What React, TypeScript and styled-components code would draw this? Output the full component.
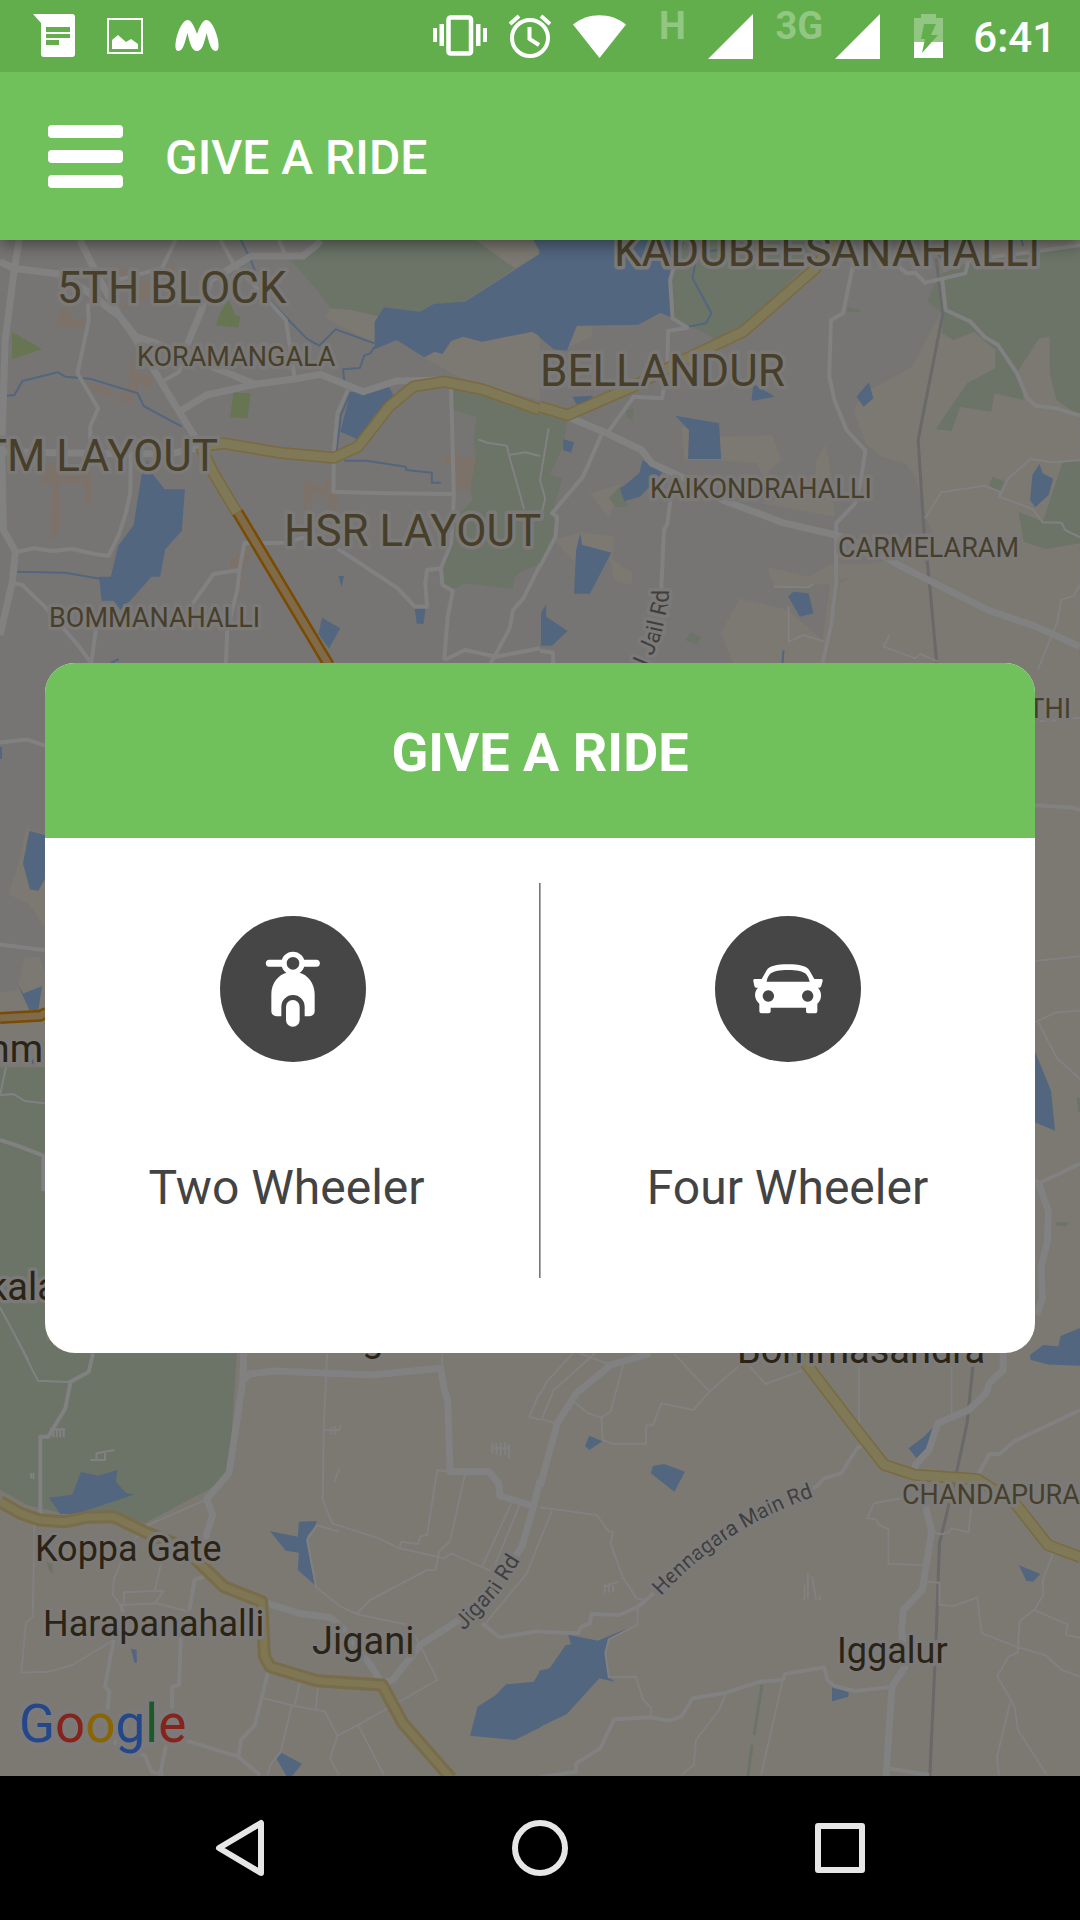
import React from "react";
import styled, { createGlobalStyle } from "styled-components";

const color = {
  brand: "#70c15b",
  brandDark: "#62ae4d",
  brandFaded: "#92c783",
  ink: "#434343",
  badge: "#464646",
  nav: "#e6e6e6",
  urban: "#777573",
  rural: "#7c7872",
  built: "#7d7269",
  park: "#6b7467",
  garden: "#677552",
  water: "#52667f",
  road: "#818182",
  rail: "#69696a",
  halo: "#7b7a79",
  district: "#473f2a",
  town: "#2b2414",
  street: "#3f3f3f",
};

const GlobalStyle = createGlobalStyle`
  *, *::before, *::after { box-sizing: border-box; }
  body { margin: 0; background: #000; }
  button { font: inherit; color: inherit; border: 0; padding: 0; background: none; cursor: pointer; }
  svg { display: block; }
`;

const Screen = styled.div`
  display: flex;
  flex-direction: column;
  min-height: 100vh;
  overflow: hidden;
  font-family: Roboto, "Liberation Sans", sans-serif;
`;

/* ---------- status bar ---------- */

const StatusBar = styled.header`
  display: flex;
  justify-content: space-between;
  align-items: center;
  height: 72px;
  padding: 0 24px 0 33px;
  background: ${color.brandDark};
  color: #fff;
  z-index: 2;
`;

const StatusGroup = styled.div<{ $gap: number }>`
  display: flex;
  align-items: center;
  gap: ${(p) => p.$gap}px;
  height: 100%;
`;

const Network = styled.div`
  display: flex;
  align-items: center;
  gap: 12px;
  height: 100%;
`;

const NetworkType = styled.span`
  align-self: flex-start;
  width: 48px;
  text-align: center;
  font-size: 38px;
  line-height: 52px;
  font-weight: 700;
  color: ${color.brandFaded};
`;

const BatterySlot = styled.div`
  padding: 0 8px 0 12px;
`;

const Clock = styled.time`
  padding-top: 4px;
  font-size: 42px;
  line-height: 48px;
  font-weight: 500;
`;

/* ---------- app bar ---------- */

const AppBar = styled.div`
  display: flex;
  align-items: center;
  gap: 42px;
  height: 168px;
  padding: 0 48px;
  background: ${color.brand};
  color: #fff;
  box-shadow: 0 4px 16px rgba(0, 0, 0, 0.45);
  z-index: 1;
`;

const MenuButton = styled.button`
  display: flex;
  flex-direction: column;
  gap: 12px;
  width: 75px;
`;

const MenuLine = styled.span`
  height: 13px;
  border-radius: 4px;
  background: #fff;
`;

const PageTitle = styled.h1`
  margin: 0;
  padding-top: 4px;
  font-size: 48px;
  line-height: 56px;
  font-weight: 500;
`;

/* ---------- map ---------- */

const Stage = styled.main`
  flex: 1;
  display: grid;
  grid-template-columns: minmax(0, 1fr);
  background: ${color.rural};
`;

const MapCanvas = styled.svg`
  grid-area: 1 / 1;
  width: 100%;
  height: 100%;
`;

const Area = styled.path<{ $fill: string }>`
  fill: ${(p) => p.$fill};
`;

const Line = styled.path<{ $stroke: string; $width: number }>`
  fill: none;
  stroke: ${(p) => p.$stroke};
  stroke-width: ${(p) => p.$width}px;
  stroke-linejoin: round;
  vector-effect: non-scaling-stroke;
`;

const MapLabel = styled.text<{ $tone: string; $size: number }>`
  font-family: Roboto, "Liberation Sans", sans-serif;
  font-size: ${(p) => p.$size}px;
  fill: ${(p) => p.$tone};
  stroke: ${color.halo};
  stroke-width: 7px;
  stroke-linejoin: round;
  paint-order: stroke;
`;

const MapLogo = styled(MapLabel)`
  stroke-width: 10px;
`;

type Kind =
  | "urban" | "rural" | "built" | "park" | "garden" | "water"
  | "stream" | "rail" | "lane" | "road" | "avenue"
  | "state" | "national" | "toll";

type Tile = { at: [number, number]; scale: [number, number]; shapes: Partial<Record<Kind, string>> };

const drawOrder: Kind[] = [
  "urban", "rural", "park", "built", "garden", "water", "stream",
  "rail", "lane", "road", "avenue", "state", "national", "toll",
];

const fills: Partial<Record<Kind, string>> = {
  urban: color.urban, rural: color.rural, built: color.built,
  park: color.park, garden: color.garden, water: color.water,
};

const strokes: Partial<Record<Kind, [string, number][]>> = {
  stream: [[color.water, 2]],
  rail: [[color.rail, 3]],
  lane: [[color.road, 2]],
  road: [[color.road, 4]],
  avenue: [[color.road, 7]],
  state: [["#786c4a", 13], ["#7f7654", 7]],
  national: [["#7a6a40", 12], ["#807957", 9]],
  toll: [["#7a4b00", 12], ["#7f6a4a", 7]],
};

const wide: [number, number] = [0.34436, 0.33333];

const tiles: Tile[] = [
  {
    at: [0, 230], scale: wide,
    shapes: {
      urban: "M0 0H1570V1720H135V2800H0Z",
      rural: "M945 262L960 235L1020 238L1098 258L1088 340L990 290ZM1230 382L1262 365L1285 372L1310 335L1345 320L1400 335L1545 305L1568 320V510L1450 480L1330 440ZM1380 30H1568V70L1495 115Z",
      park: "M930 30H1380L1495 115L1345 215L1220 245L1115 232L1098 258L1020 240L960 235L920 180L845 90L890 80ZM1315 475L1440 490L1570 550V1005L1520 1020L1495 1040L1488 1077L1350 1060L1318 1078L1290 1065L1288 1000L1305 940L1325 860L1372 810L1365 770L1382 680L1375 630L1384 560L1315 540Z",
      built: "M175 235H200L205 265L243 268L238 292L163 290ZM395 370L385 425L448 445L430 475L405 455L380 520L340 510L375 460L380 390ZM400 150L435 155L430 205L380 225L350 250ZM120 700H265V825H245V758H172L175 850L165 928H147L152 760H120ZM883 752H905V770H940L955 728L970 790L985 795L975 840H955L950 790H905V840H883ZM1290 680L1325 665L1345 685L1382 682L1365 780H1320V700H1290ZM668 990L720 950L725 985L702 1030L695 1110L685 1105L690 1015L668 1010ZM240 450L325 480L318 500L260 480ZM345 115L370 120V145H345ZM478 97L515 105L500 130L470 120Z",
      garden: "M35 305L122 358L35 387ZM665 210L683 255L698 258L692 293L627 286L640 245ZM678 487L728 490L719 565L668 562Z",
      water: "M1570 70V320L1545 305L1400 335L1345 320L1310 332L1285 372L1262 365L1232 382L1152 330L1088 358V275L1115 232L1220 245L1260 222L1350 215ZM1548 30H1570V68ZM1018 487L1130 472L1142 495L1085 560L1038 628L988 605ZM428 690L438 725L478 778H537L528 902L480 958L465 1040H440L380 1110L350 1140L330 1112H295L288 1040H322L343 948L388 885L412 730ZM983 1038H999L992 1072ZM1204 1133H1236L1230 1181H1210ZM935 1163L988 1195L955 1256L925 1212Z",
      stream: "M700 30L730 95L765 190L810 240L890 325L927 347L975 298L1088 340M1088 350L1075 370L1058 376L1045 414L996 418L1000 455M15 497L42 495L65 453L168 427L190 440L260 446L400 490L417 528L528 590M50 1025L190 1028L290 1046M1018 487L990 555L977 665M1000 692L1065 692L1178 710L1180 720L1254 728V758H1280M322 1299L345 1287",
      avenue: "M232 30L290 150L345 255L390 320L470 460L520 545L590 660M0 95L40 115L170 132L240 175L350 262L395 320L455 340L520 370L640 420L740 463L855 447L930 433L1055 485L1150 453L1290 450M55 30L40 130L15 330L5 660L10 900L45 965L35 1060L0 1215M0 665L380 672L500 670L590 650M930 30L920 45L880 78L730 78L670 115L610 150L585 240L545 340M740 463L600 495L520 545",
      road: "M545 340L520 425L470 455M510 30L470 115L340 150M640 30L680 105L720 145L830 270L855 440M810 30L830 80M255 220L258 270L225 430L285 535L262 590V650M380 680L378 790L365 850L345 915L315 978L275 972L210 957L150 963L100 955L50 965M1010 480L980 550L970 660L968 785L1120 790L1315 792M1310 475L1318 800L1310 940L1280 1015L1285 1065L1315 1083L1300 1160L1290 1290M1280 1015L1240 1020L1235 1060L1240 1130H1205L1155 1075L980 955M740 940L830 938L890 920M740 940L710 938L695 1020L690 1075L660 1200L656 1300M695 1020L620 1032L560 1120M40 1060L65 1065L130 1130L230 1250L265 1300L280 1190M1290 1290L1350 1260L1440 1280L1568 1255M1425 1300L1480 1195L1490 1140L1520 1105L1568 1005",
      lane: "M1388 628L1415 638L1472 647L1478 675L1522 838M1478 675L1525 667L1568 678",
      national: "M590 648L650 640L810 668L970 683L1040 650L1130 530L1200 470L1290 455L1400 478L1570 540M583 650L620 730L690 850",
      toll: "M690 847L955 1305",
    },
  },
  {
    at: [540, 230], scale: wide,
    shapes: {
      urban: "M0 0H1170V900L870 1060L830 1320H0Z",
      rural: "M1165 245L1200 330L1568 200V1320H1150L1120 1120L1050 1150L1080 1250L990 1230L1000 1110L950 1080L980 1030L870 1050L830 1320H700L560 1300L525 1210L580 1105L720 1140L820 1230L850 1000L960 1000L1160 960L1120 860L1090 740L1060 700L990 680L945 640L910 540L940 490L1080 410ZM108 288H153L150 320L95 345L75 362ZM410 590L530 620L675 615L700 690L650 740L630 700L520 690H420ZM800 690L830 645L850 760L855 860L640 820L800 780ZM40 930L120 905L215 920L210 990L270 1030L265 1065L215 1050L200 970L95 990ZM660 1010L780 1040L850 1000L860 1060L680 1075ZM145 790L240 760L200 865Z",
      park: "M410 30H840L600 290L520 335L480 310L380 260L378 150ZM1170 130L1240 100L1390 70L1568 45V560L1500 510L1480 430L1480 320L1450 325L1390 420L1405 510L1320 490L1310 545L1220 530L1195 603L1150 597L1240 460L1323 415V360L1260 305L1200 330L1168 310L1170 250L1125 215L1145 165ZM1390 845L1460 875L1520 690L1568 695V940L1470 957L1405 935ZM1315 740L1348 755L1335 785L1303 765ZM0 545L78 573L70 640L30 735L65 745L35 850L50 900L0 1000ZM200 805L235 765L255 830L220 832ZM420 1230L440 1207L467 1222L455 1245ZM893 231L930 238V246H893ZM250 540L272 535L268 570L250 562Z",
      water: "M-2 30H420L378 150L385 265L350 248L285 284L107 287L78 362L40 358L-2 322ZM620 462L682 500L614 513ZM955 457L968 505L940 530L919 500ZM393 557L520 580L526 687H430L433 600ZM298 690L355 728L320 768L290 800L245 814L232 777L288 730ZM117 910L122 944L207 968L145 1091H99L105 960ZM18 1122V1160L80 1203L35 1247H3V1150ZM735 1085L780 1090L794 1150L755 1160L721 1100ZM1450 702L1460 730L1490 746L1477 795L1438 832L1423 810L1430 735ZM68 628L99 637L90 668L67 660ZM95 500L155 497L130 525L105 522ZM770 780L820 775L805 810Z",
      stream: "M628 35L570 75L510 60L455 75L443 145L498 250L482 280L430 290M1155 70L1180 105L1230 80M707 1262L704 1300M1398 30L1403 48",
      rail: "M1150 85L1170 250L1098 630L1115 900L1133 1080L1152 1300",
      lane: "M1118 865L1165 787L1290 767L1335 785L1333 800L1430 837L1460 877L1515 878L1525 900L1568 922M1335 800L1360 745L1425 687L1490 697L1568 690M722 1130V1235L765 1215L825 1235M680 1070L780 1072L793 1062M1568 1065L1550 1097L1513 1110L1503 1175L1445 1320M1015 1215L998 1250L1090 1285L1105 1272L1155 1295M25 595L0 750L15 805L5 850",
      road: "M410 30L378 150L385 265L428 293L372 303L370 400L355 505L272 500L195 610M910 100L880 250L845 270L840 440L855 510L890 600L945 662L930 760L915 820L860 880V1060L845 1190L820 1300M1020 90L1065 130L1090 128L1118 158L1235 130L1245 90L1400 70L1568 45M1168 150L1178 240L1250 275L1290 320L1330 345L1385 430L1415 505L1440 527L1500 535L1568 557M180 610L125 740L35 850L50 860L45 920L0 1010M380 800L370 880L360 900L352 1080M0 1262L38 1268V1300",
      avenue: "M90 565L195 610L295 660L325 700L420 745L530 810L705 878L860 915L970 960L1050 1010L1300 1140L1440 1190L1568 1250",
      national: "M-2 530L80 555L270 470L420 388L590 305L800 115L855 30",
    },
  },
  {
    at: [0, 660], scale: [0.33333, 0.44643],
    shapes: {
      rural: "M80 375L135 392V600L85 545L25 525L55 455ZM0 745L50 740L75 665H120L135 700V1100H0Z",
      park: "M0 912H140V1568H0Z",
      water: "M0 195H6V222H0ZM88 383L135 392V490L115 517L90 514L69 455ZM52 725L70 747L126 731L115 784H88ZM80 900L105 893L100 906Z",
      lane: "M18 912L0 975L40 972L75 988L135 993M0 1450L85 1568",
      road: "M0 185L80 178L135 192M0 637L135 650M0 1075L60 1090L130 1110V1190",
      toll: "M0 802L120 797L140 790",
    },
  },
  {
    at: [960, 640], scale: [0.33333, 0.47194],
    shapes: {
      park: "M288 1233L328 1235L318 1242L288 1240ZM350 970H360V1000H355Z",
      water: "M225 872L273 955L285 1040L225 1022ZM210 1515L250 1494L295 1497L302 1475L360 1458V1538L265 1535L212 1525Z",
      lane: "M225 680L360 670M225 810L285 790L360 785M235 810L290 885L360 930M225 170L250 172L360 165",
      road: "M225 350L335 355L360 360M360 1110L240 1150L225 1145",
      avenue: "M235 1150L265 1210L262 1275L243 1330L247 1395L230 1430",
    },
  },
  {
    at: [0, 1340], scale: wide,
    shapes: {
      park: "M0 0H690L665 400L630 435L420 550L330 520L180 520L80 495L0 450ZM135 665L153 672V702L142 690Z",
      water: "M235 396L285 407L340 390L337 425L365 458L388 464L220 522H175L142 473L210 464ZM868 545L920 543L915 560L892 588L900 660L918 738L865 690L868 638L830 632L784 574L865 590ZM380 926L397 930V969H391ZM1570 990L1550 1025L1470 1033L1440 1065L1387 1100L1365 1187L1495 1200L1570 1162ZM818 1239L877 1271L848 1308H832L802 1254Z",
      lane: "M50 0L110 122L195 126L205 122M950 40L940 270L937 480L965 550L1100 595L1160 625L1290 655L1310 640L1430 695M600 478L430 555L390 600M100 545L95 830L75 850L62 998L140 995L210 975L330 900M470 660L450 750M350 670L330 720L328 765L350 795L455 790L550 815M360 790V757L475 752L450 790M1284 40V85M1307 395L1270 390L1240 585L1220 590L1215 612L1165 605L1160 625M1350 405L1307 603L1275 635L1265 690L1240 690L1075 780L1035 822L990 800L918 742L892 600L920 556L985 575M1035 822L1185 855L1220 915L1270 1020L1040 1155L980 1187L958 1255L985 1305M1040 1155L1115 1305M870 1030L855 1098L765 1075M923 1035L917 1112M855 1098L943 1114L980 1187M847 1098L815 1235L785 1275L778 1305M1485 490L1400 680M1510 492L1435 680M1568 155L1537 230L1568 240M1568 600L1530 700L1410 850M940 270H985L990 255M962 260V285M972 258V285M970 427L985 387M145 268H190M155 270V292M165 270V292M175 270V292M185 270V292M263 360H305V340M280 360V340L332 330M1430 310V340M1442 308V345M1454 306V348M1466 306V345M1478 312V355M1428 325H1480M90 400V415M97 398V418",
      road: "M270 40L258 95L205 125L190 205L140 290H117V522M600 680L590 710L565 720L550 810M1400 850L1450 892L1568 873M330 900L305 1040L318 1055L308 1150L345 1230L420 1245L440 1295L475 1305M525 890L520 1035L500 1040V1130M490 1180L465 1300M780 990L740 1155L700 1200L692 1250L755 1305M520 1195L692 1250M340 1180L350 1240M350 790L360 830",
      avenue: "M708 40L705 120L690 230L665 400L600 478L618 525L600 580V680M705 120L725 102L800 93L1080 105L1280 85L1290 150L1300 180L1307 395L1420 395L1448 430L1452 468L1550 498L1568 420M1550 498L1515 620L1490 660M760 785L870 820L960 833L990 860L1060 950L1110 1030L1140 1020L1220 915L1340 835",
      state: "M0 485L60 520L115 540L190 545L250 532L330 530L430 580L530 620L600 690L650 740L760 785L768 950L785 980L920 1022L1110 1035L1170 1150L1310 1315",
    },
  },
  {
    at: [540, 1340], scale: wide,
    shapes: {
      water: "M143 287L181 304L143 330L131 318ZM328 378L360 372L421 395L390 455L322 400ZM1142 262L1130 320L1093 354L1070 325L1115 290ZM1391 676L1453 702L1432 725L1412 722ZM82 884L168 902L255 865L200 898L190 940L200 1012L217 1025L172 1015L78 1122L-2 1162V992L28 985L75 915L90 913ZM848 1041L896 1057V1070L848 1084Z",
      rail: "M1257 80L1240 250L1205 420L1160 610L1150 900L1132 1308",
      lane: "M95 40L20 125L0 165M160 40L40 150L5 238L45 250M115 40L205 75M243 70L205 215L178 233L140 220L95 182M178 233L182 300L210 311H308V257L328 255L352 190L445 210L492 155L390 42M492 155L575 80M610 80L655 132L760 92M927 80V250M1195 80V235M0 502L165 525L200 575H212L205 610L240 710L280 775L300 780M35 512L0 600M285 790L282 855L200 898L190 940L200 1012L278 1010L300 1080L323 1103V1130M540 1060L520 1110L453 1200L447 1275L410 1305M705 1020L642 1305M1050 475L970 490L950 535L975 538L985 555L1012 567V672L1112 675M1137 575L1165 583L1190 575L1195 565L1245 577L1253 490M1120 725L1160 728V795L1200 798L1270 773L1283 880L1385 920L1470 947L1515 990L1568 1010M1490 640L1460 720L1462 765L1435 810L1393 843L1387 938L1360 950L1328 1008L1378 1100L1388 1170L1472 1305M1435 810L1532 853L1527 885L1568 893M1365 1090L1327 1250L1333 1305M768 735V780M778 700V775M790 710L802 780M812 765V780M188 730V760M200 728V758M212 728V756M185 740L228 725",
      road: "M940 315L920 325L875 400L825 415L805 438L780 450M330 760L285 800L230 825L150 822L145 850L120 860L110 880L0 875M0 1312L105 1295V1270L175 1225L215 1138L320 1132L375 1142L410 1130L443 1075L540 1058L640 1025L705 1020L712 1002L825 982L835 1020L855 1038L915 1053L1022 1040M1010 1285L1130 1305M1568 210L1375 305L1335 342H1305L1268 412",
      avenue: "M0 440L50 250L105 160L205 75L320 40M1345 40V90L1305 130L1295 160L1245 210L1155 250L1130 330L1090 375V400L1120 500L1137 575L1110 750L1055 810L1050 870L1060 980L1022 1040L1005 1308",
      national: "M735 20L920 270L1000 375L1090 405L1270 418L1380 490L1475 615L1570 652",
    },
  },
];

type Place = { text: string; x: number; y: number; size: number; anchor?: "start" | "middle" | "end"; town?: boolean };

const places: Place[] = [
  { text: "KADUBEESANAHALLI", x: 614, y: 266, size: 44 },
  { text: "5TH BLOCK", x: 57, y: 303, size: 44 },
  { text: "BELLANDUR", x: 540, y: 386, size: 44 },
  { text: "BTM LAYOUT", x: 218, y: 471, size: 44, anchor: "end" },
  { text: "HSR LAYOUT", x: 284, y: 546, size: 44 },
  { text: "KORAMANGALA", x: 137, y: 366, size: 27 },
  { text: "BOMMANAHALLI", x: 49, y: 627, size: 27 },
  { text: "KAIKONDRAHALLI", x: 650, y: 498, size: 27 },
  { text: "CARMELARAM", x: 838, y: 557, size: 27 },
  { text: "THI", x: 1071, y: 718, size: 27, anchor: "end" },
  { text: "CHANDAPURA", x: 902, y: 1504, size: 27 },
  { text: "mm", x: 43, y: 1062, size: 38, anchor: "end", town: true },
  { text: "kala", x: -12, y: 1300, size: 38, town: true },
  { text: "g", x: 373, y: 1351, size: 38, anchor: "middle", town: true },
  { text: "Bommasandra", x: 737, y: 1363, size: 38, town: true },
  { text: "Koppa Gate", x: 35, y: 1561, size: 36, town: true },
  { text: "Harapanahalli", x: 43, y: 1636, size: 36, town: true },
  { text: "Jigani", x: 312, y: 1654, size: 38, town: true },
  { text: "Iggalur", x: 837, y: 1663, size: 36, town: true },
];

const streets = [
  { id: "jail-road", text: "l Jail Rd", size: 23, d: "M648 667L661 636L669 600V540" },
  { id: "jigani-road", text: "Jigani Rd", size: 22, d: "M464 1631L500 1592L530 1545" },
  { id: "hennagara-road", text: "Hennagara Main Rd", size: 21, d: "M661 1596Q730 1522 826 1493" },
];

const CityMap = () => (
  <MapCanvas viewBox="0 240 1080 1536" preserveAspectRatio="xMidYMid slice" role="img" aria-label="Map of south Bengaluru">
    {drawOrder.map((kind) => (
      <g key={kind}>
        {tiles.map((tile) => {
          const d = tile.shapes[kind];
          if (!d) return null;
          const fill = fills[kind];
          return (
            <g key={tile.at.join()} transform={`translate(${tile.at.join()}) scale(${tile.scale.join()})`}>
              {fill ? (
                <Area $fill={fill} d={d} />
              ) : (
                strokes[kind]!.map(([stroke, width]) => <Line key={width} $stroke={stroke} $width={width} d={d} />)
              )}
            </g>
          );
        })}
      </g>
    ))}
    <Line $stroke={color.park} $width={3} d="M762 1685L754 1735M752 1745L748 1776" />
    {places.map((p) => (
      <MapLabel key={p.text} x={p.x} y={p.y} $size={p.size} $tone={p.town ? color.town : color.district} textAnchor={p.anchor}>
        {p.text}
      </MapLabel>
    ))}
    {streets.map((s) => (
      <React.Fragment key={s.id}>
        <path id={s.id} d={s.d} fill="none" />
        <MapLabel $size={s.size} $tone={color.street}>
          <textPath href={`#${s.id}`}>{s.text}</textPath>
        </MapLabel>
      </React.Fragment>
    ))}
    <MapLogo x="19" y="1742" $size={53} $tone="#24478a">
      G<tspan fill="#85231d">o</tspan><tspan fill="#8a6502">o</tspan>g<tspan fill="#1a5a2b">l</tspan><tspan fill="#85231d">e</tspan>
    </MapLogo>
  </MapCanvas>
);

/* ---------- dialog ---------- */

const Dialog = styled.section`
  grid-area: 1 / 1;
  align-self: center;
  margin: 0 45px;
  border-radius: 30px;
  overflow: hidden;
  background: #fff;
`;

const DialogTitle = styled.h2`
  margin: 0;
  padding: 58px 0 53px;
  background: ${color.brand};
  color: #fff;
  text-align: center;
  font-size: 54px;
  line-height: 64px;
  font-weight: 700;
`;

const Choices = styled.div`
  display: grid;
  grid-template-columns: 1fr 1fr;
  padding: 45px 0 75px;
`;

const Choice = styled.button`
  display: flex;
  flex-direction: column;
  align-items: center;
  gap: 98px;
  padding: 33px 0 62px;
  color: ${color.ink};
  font-size: 48px;
  line-height: 56px;
  white-space: pre;

  & + & {
    box-shadow: -1px 0 0 #777, inset 1px 0 0 #aaa;
  }
`;

const Badge = styled.span`
  width: 146px;
  height: 146px;
  border-radius: 50%;
  background: ${color.badge};
`;

const Scooter = () => (
  <svg viewBox="0 0 438 438" fill="#fff" aria-hidden="true">
    <path d="M148 142H289" stroke="#fff" strokeWidth="21" strokeLinecap="round" />
    <circle cx="219" cy="142" r="27" fill={color.badge} stroke="#fff" strokeWidth="16" />
    <path d="M154 286V235C154 200 176 176 200 170H238C262 176 284 200 284 235V286a15 15 0 0 1-15 15H254V272a35 35 0 0 0-70 0V301H169a15 15 0 0 1-15-15Z" />
    <rect x="198" y="252" width="41" height="80" rx="20" />
  </svg>
);

const Car = () => (
  <svg viewBox="0 0 438 438" fill="#fff" fillRule="evenodd" aria-hidden="true">
    <path d="M140 189L155 163C162 150 185 145 219 145C253 145 276 150 283 163L298 189H319q5 0 4 6l-4 14q-2 6-6 6h-4C321 227 322 250 307 263V286q0 6-6 6H279q-6 0-6-6V275H167V286q0 6-6 6H139q-6 0-6-6V263C116 250 117 227 129 215h-6q-4 0-5-6l-3-14q-1-6 4-6ZM155 197H284C278 175 272 162 219 162C166 162 160 175 155 197ZM160 223a17 17 0 1 0 .1 0ZM278 223a17 17 0 1 0 .1 0Z" />
  </svg>
);

/* ---------- navigation bar ---------- */

const NavBar = styled.nav`
  display: grid;
  grid-template-columns: repeat(3, 1fr);
  height: 144px;
  padding: 0 90px;
  background: #000;
`;

const NavButton = styled.button`
  display: grid;
  place-items: center;

  svg {
    fill: none;
    stroke: ${color.nav};
    stroke-width: 6px;
    stroke-linejoin: round;
  }
`;

const Signal = () => (
  <svg width="45" height="45" viewBox="0 0 45 45" fill="#fff"><path d="M45 0V45H0Z" /></svg>
);

export default function App() {
  return (
    <Screen>
      <GlobalStyle />
      <StatusBar>
        <StatusGroup $gap={32}>
          <svg width="42" height="44" viewBox="0 0 42 44" fill="#fff">
            <path fillRule="evenodd" d="M0 0H39q3 0 3 3V40q0 3-3 3H11q-3 0-3-3V9ZM13 13V18H37V13ZM13 20V24H37V20ZM13 26V31H26V26Z" />
          </svg>
          <svg width="36" height="36" viewBox="0 0 36 36" fill="#fff">
            <path d="M1 1H35V35H1Z" fill="none" stroke="#fff" strokeWidth="2" />
            <path d="M5 22L11 17L19 24L24 21L31 26V31H5Z" />
          </svg>
          <svg width="44" height="32" viewBox="0 0 44 32" fill="#fff">
            <path d="M3.500 31C0 31 0 26 1 20C3 10 8 0 12.500 0C16.500 0 20 8 22 14C24 8 27.500 0 31.500 0C36 0 41 10 43 20C44 26 44 31 40.500 31C36 31 34 22 31.500 13C29 24 27 31 22 31C17 31 15 24 12.500 13C10 22 8 31 3.500 31Z" />
          </svg>
        </StatusGroup>
        <StatusGroup $gap={22}>
          <svg width="54" height="42" viewBox="0 0 54 42" fill="#fff">
            <rect x="15.500" y="2.500" width="22.500" height="36" rx="2" fill="none" stroke="#fff" strokeWidth="4.500" />
            <path d="M0 13H4V27H0ZM6.500 9H11V31H6.500ZM43 9H47.500V31H43ZM50 13H54V27H50Z" />
          </svg>
          <svg width="42" height="44" viewBox="0 0 42 44" fill="none" stroke="#fff" strokeWidth="4">
            <circle cx="21" cy="24" r="18" />
            <path d="M20.500 13V25L30 31M1 10L10 2M41 10L32 2" />
          </svg>
          <svg width="53" height="43" viewBox="0 0 53 43" fill="#fff"><path d="M0 9.500C15-3 38-3 53 9.500L26.500 43Z" /></svg>
          <Network><NetworkType>H</NetworkType><Signal /></Network>
          <Network><NetworkType>3G</NetworkType><Signal /></Network>
          <BatterySlot>
            <svg width="29" height="44" viewBox="0 0 29 44">
              <path d="M0 4H7V0H22V4H29V28H0Z" fill={color.brandFaded} />
              <path d="M0 28H29V44H0Z" fill="#fff" />
              <path d="M10 10H22L17 21H24L8 39L11 25H7Z" fill={color.brandDark} />
            </svg>
          </BatterySlot>
          <Clock>6:41</Clock>
        </StatusGroup>
      </StatusBar>
      <AppBar>
        <MenuButton aria-label="Open menu"><MenuLine /><MenuLine /><MenuLine /></MenuButton>
        <PageTitle>GIVE A RIDE</PageTitle>
      </AppBar>
      <Stage>
        <CityMap />
        <Dialog role="dialog" aria-labelledby="ride-dialog-title">
          <DialogTitle id="ride-dialog-title">GIVE A RIDE</DialogTitle>
          <Choices>
            <Choice><Badge><Scooter /></Badge>{"Two Wheeler "}</Choice>
            <Choice><Badge><Car /></Badge>Four Wheeler</Choice>
          </Choices>
        </Dialog>
      </Stage>
      <NavBar>
        <NavButton aria-label="Back">
          <svg width="50" height="58" viewBox="0 0 50 58"><path d="M46 4V54L4 29Z" /></svg>
        </NavButton>
        <NavButton aria-label="Home">
          <svg width="56" height="56" viewBox="0 0 56 56"><circle cx="28" cy="28" r="25" /></svg>
        </NavButton>
        <NavButton aria-label="Recent apps">
          <svg width="50" height="50" viewBox="0 0 50 50"><path d="M3 3H47V47H3Z" /></svg>
        </NavButton>
      </NavBar>
    </Screen>
  );
}
